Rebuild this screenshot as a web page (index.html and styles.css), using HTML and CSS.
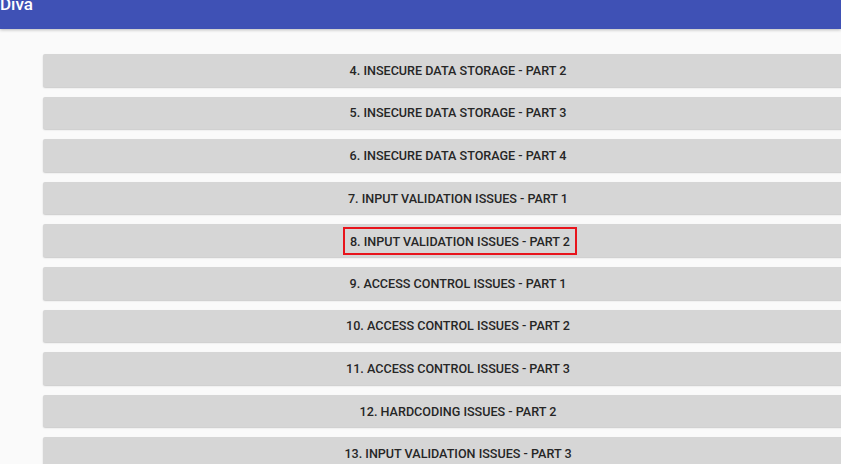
FILE: index.html
```html
<!DOCTYPE html>
<html>
<head>
<meta charset="utf-8">
<link rel="stylesheet" href="styles.css">
</head>
<body>
<header class="appbar"><span class="title">Diva</span></header>
<main class="list">
  <button class="item">4. INSECURE DATA STORAGE - PART 2</button>
  <button class="item">5. INSECURE DATA STORAGE - PART 3</button>
  <button class="item">6. INSECURE DATA STORAGE - PART 4</button>
  <button class="item">7. INPUT VALIDATION ISSUES - PART 1</button>
  <button class="item"><span class="highlight">8. INPUT VALIDATION ISSUES - PART 2</span></button>
  <button class="item">9. ACCESS CONTROL ISSUES - PART 1</button>
  <button class="item">10. ACCESS CONTROL ISSUES - PART 2</button>
  <button class="item">11. ACCESS CONTROL ISSUES - PART 3</button>
  <button class="item">12. HARDCODING ISSUES - PART 2</button>
  <button class="item">13. INPUT VALIDATION ISSUES - PART 3</button>
</main>
</body>
</html>
```
FILE: styles.css
```css
html, body {
  margin: 0;
  padding: 0;
  width: 841px;
  height: 464px;
  overflow: hidden;
  background: #fafafa;
  font-family: Roboto, "Noto Sans", sans-serif;
}
.appbar {
  height: 33px;
  background: #3f51b5;
  box-shadow: 0 1px 3px rgba(0,0,0,0.25);
  position: relative;
  z-index: 1;
}
.title {
  display: block;
  color: #fff;
  font-size: 17px;
  font-weight: 500;
  line-height: 17px;
  margin-top: -4px;
}
.list {
  display: flex;
  flex-direction: column;
  gap: 10px;
  padding: 25px 0 0 43px;
}
.item {
  width: 830px;
  height: 32.6px;
  flex: none;
  border: none;
  border-radius: 2px;
  background: #d6d6d6;
  box-shadow: 0 1px 1.5px rgba(0,0,0,0.2);
  color: #262626;
  font-family: Roboto, "Noto Sans", sans-serif;
  font-size: 12.6px;
  font-weight: 500;
  padding: 0;
  display: flex;
  align-items: center;
  justify-content: center;
}
.highlight {
  border: 2px solid #e8141c;
  padding: 5px 5px 4px;
  margin-left: 4px;
}
```
